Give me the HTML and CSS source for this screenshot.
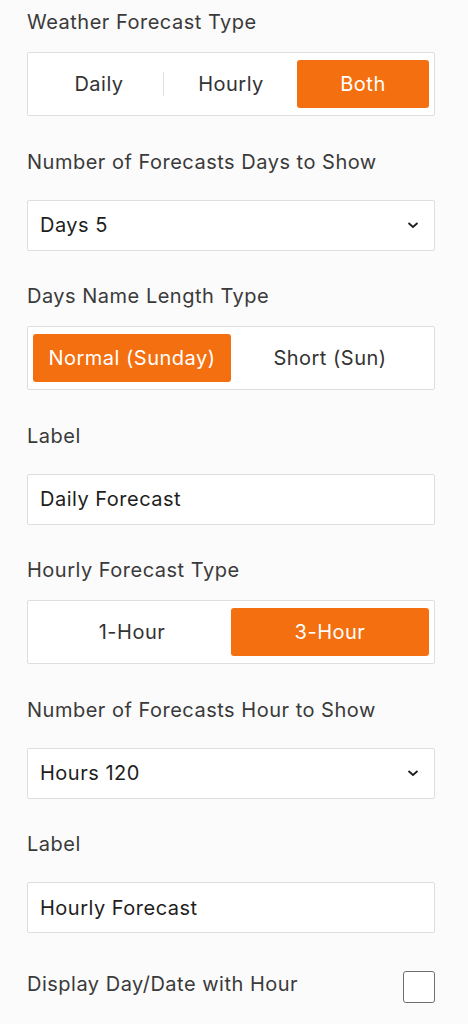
FILE: index.html
```html
<!DOCTYPE html>
<html>
<head>
    <title>Forecast Settings</title>
    <link rel="stylesheet" href="styles.css">
</head>
<body>
    <div class="panel">
        <!-- Forecast type -->
        <div class="field">
            <div class="field-label">Weather Forecast Type</div>
            <div class="toggle-group">
                <button class="toggle-btn">Daily</button>
                <span class="toggle-sep"></span>
                <button class="toggle-btn">Hourly</button>
                <button class="toggle-btn active">Both</button>
            </div>
        </div>

        <div class="field">
            <div class="field-label">Number of Forecasts Days to Show</div>
            <div class="select-box">
                <span>Days 5</span>
                <svg class="chevron" width="12" height="8" viewBox="0 0 12 8"><path d="M1.5 2 L6 6 L10.5 2" fill="none" stroke="#1e1e1e" stroke-width="1.8"/></svg>
            </div>
        </div>

        <div class="field">
            <div class="field-label">Days Name Length Type</div>
            <div class="toggle-group">
                <button class="toggle-btn active">Normal (Sunday)</button>
                <button class="toggle-btn">Short (Sun)</button>
            </div>
        </div>

        <div class="field">
            <div class="field-label">Label</div>
            <div class="text-input">Daily Forecast</div>
        </div>

        <!-- Hourly -->
        <div class="field">
            <div class="field-label">Hourly Forecast Type</div>
            <div class="toggle-group">
                <button class="toggle-btn">1-Hour</button>
                <button class="toggle-btn active">3-Hour</button>
            </div>
        </div>

        <div class="field">
            <div class="field-label">Number of Forecasts Hour to Show</div>
            <div class="select-box">
                <span>Hours 120</span>
                <svg class="chevron" width="12" height="8" viewBox="0 0 12 8"><path d="M1.5 2 L6 6 L10.5 2" fill="none" stroke="#1e1e1e" stroke-width="1.8"/></svg>
            </div>
        </div>

        <div class="field">
            <div class="field-label">Label</div>
            <div class="text-input">Hourly Forecast</div>
        </div>

        <div class="check-row">
            <span class="check-label">Display Day/Date with Hour</span>
            <span class="checkbox"></span>
        </div>
    </div>
</body>
</html>
```

FILE: styles.css
```css
body {
    margin: 0;
    padding: 0;
    background: #fbfbfb;
    font-family: Inter, "Noto Sans", Arial, sans-serif;
    color: #333;
    letter-spacing: 0.5px;
}

.panel {
    width: 408px;
    margin-left: 27px;
    padding-top: 10px;
}

.field {
    margin-bottom: 33.5px;
}

.field-label {
    font-size: 20px;
    line-height: 24px;
    color: #3a3a3a;
    margin-bottom: 26px;
}

.field:has(.toggle-group) .field-label {
    margin-bottom: 18px;
}

.toggle-group {
    display: flex;
    align-items: center;
    height: 64px;
    box-sizing: border-box;
    padding: 7px 5px;
    background: white;
    border: 1px solid #dedede;
    border-radius: 2px;
}

.toggle-btn {
    flex: 1;
    height: 48px;
    border: none;
    background: none;
    border-radius: 3px;
    font-family: inherit;
    font-size: 20px;
    letter-spacing: 0.5px;
    color: #333;
    padding: 0;
}

.toggle-btn.active {
    background: #f36f10;
    color: white;
}

.toggle-sep {
    width: 1px;
    height: 24px;
    background: #e2e2e2;
    margin: 0 -1px 0 0;
    position: relative;
    left: -2px;
}

.select-box,
.text-input {
    display: flex;
    align-items: center;
    justify-content: space-between;
    height: 51px;
    box-sizing: border-box;
    padding: 0 15px 0 12px;
    background: white;
    border: 1px solid #dedede;
    border-radius: 2px;
    font-size: 20px;
    color: #1e1e1e;
}

.check-row {
    display: flex;
    align-items: center;
    justify-content: space-between;
    padding-top: 4px;
}

.check-label {
    font-size: 20px;
    color: #3a3a3a;
    padding-bottom: 6px;
}

.checkbox {
    width: 32px;
    height: 32px;
    box-sizing: border-box;
    border: 1.5px solid #6e6e6e;
    border-radius: 3px;
    background: white;
}
```
